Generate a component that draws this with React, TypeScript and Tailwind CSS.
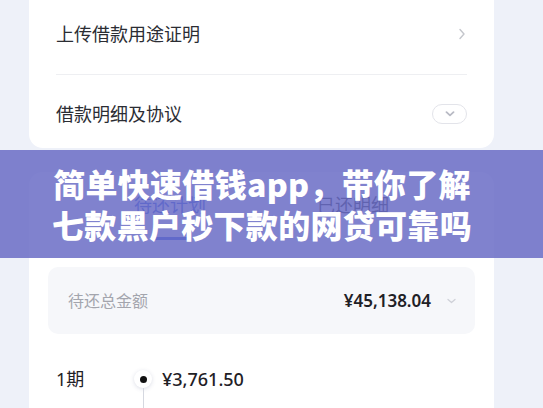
import React from "react";

const font = { fontFamily: '"Noto Sans", "Noto Sans CJK SC", sans-serif' };

export default function App() {
  return (
    <div
      className="relative w-[543px] h-[408px] overflow-hidden bg-[#eef1f9] pl-[29px] pr-[49px]"
      style={font}
    >
      {/* Card 1 */}
      <div className="bg-white rounded-b-[14px] px-[27px]">
        <div className="h-[68px] flex items-center justify-between">
          <span className="text-[18px] text-[#2b2d33]">上传借款用途证明</span>
          <svg width="8" height="12" viewBox="0 0 8 12" className="mr-[1px]">
            <path d="M2 1.5 L6 6 L2 10.5" fill="none" stroke="#c4c6cc" strokeWidth="1.4" strokeLinecap="round" strokeLinejoin="round" />
          </svg>
        </div>
        <div className="mt-[6px] h-px bg-[#eeeff2]" />
        <div className="mt-[5px] h-[68px] flex items-center justify-between">
          <span className="text-[18px] text-[#2b2d33]">借款明细及协议</span>
          <div className="w-[35px] h-[20px] rounded-full border border-[#e3e4ea] flex items-center justify-center">
            <svg width="10" height="6" viewBox="0 0 10 6">
              <path d="M1.5 1.2 L5 4.4 L8.5 1.2" fill="none" stroke="#b8bac4" strokeWidth="1.8" strokeLinecap="round" strokeLinejoin="round" />
            </svg>
          </div>
        </div>
      </div>

      {/* Card 2 */}
      <div className="mt-[24px] bg-white rounded-[14px] px-[19px] pb-[20px]">
        <div className="h-[68px] flex items-end justify-center gap-[111px]">
          <div className="flex flex-col items-center">
            <span className="text-[18px] leading-[24px] text-[#2f5be0]">待还计划</span>
            <div className="mt-[20px] w-[40px] h-[3px] rounded-full bg-[#2f5be0]" />
          </div>
          <div className="flex flex-col items-center">
            <span className="text-[18px] leading-[24px] text-[#2b2d33]">已还明细</span>
            <div className="mt-[20px] w-[40px] h-[3px]" />
          </div>
        </div>
        <div className="mt-[27px] h-[67px] rounded-[10px] bg-[#f6f7fa] pl-[20px] pr-[19px] flex items-center justify-between">
          <span className="text-[16px] text-[#a3a5ad]">待还总金额</span>
          <div className="flex items-center gap-[16px]">
            <span className="text-[17px] font-semibold text-[#1f2126]">¥45,138.04</span>
            <svg width="9" height="6" viewBox="0 0 9 6">
              <path d="M1 1.5 L4.5 4.5 L8 1.5" fill="none" stroke="#cfd1d8" strokeWidth="1.3" strokeLinecap="round" strokeLinejoin="round" />
            </svg>
          </div>
        </div>
        <div className="mt-[32px] flex px-[8px]">
          <div className="w-[74px] flex flex-col">
            <span className="text-[18px] leading-[26px] text-[#1f2126]">1期</span>
            <span className="mt-[13px] text-[13px] text-[#b0b2ba]">2024/03/08</span>
          </div>
          <div className="w-[26px] flex flex-col items-center">
            <div className="mt-[4px] w-[18px] h-[18px] rounded-full bg-white shadow-[0_1px_4px_rgba(60,70,120,0.18)] flex items-center justify-center">
              <div className="w-[7px] h-[7px] rounded-full bg-[#111]" />
            </div>
            <div className="w-px h-[40px] bg-[#d5d8e0]" />
          </div>
          <div className="ml-[6px] flex flex-col">
            <span className="text-[18px] leading-[26px] font-medium text-[#1f2126]">¥3,761.50</span>
            <span className="mt-[13px] text-[13px] text-[#b0b2ba]">本金 ¥3,500.00　　利息 ¥261.50</span>
          </div>
        </div>
      </div>

      {/* Banner overlay */}
      <div className="absolute left-0 top-[150px] w-[543px] h-[108px] pr-[19px] bg-[rgba(106,108,198,0.85)] flex flex-col items-center justify-center">
        <div
          className="text-white font-black text-[32px] leading-[41px] tracking-[0.3px]"
          style={{ fontFamily: '"Noto Sans CJK SC", "Noto Sans", sans-serif' }}
        >
          简单快速借钱app，带你了解
        </div>
        <div
          className="text-white font-black text-[32px] leading-[41px] tracking-[0.3px]"
          style={{ fontFamily: '"Noto Sans CJK SC", "Noto Sans", sans-serif' }}
        >
          七款黑户秒下款的网贷可靠吗
        </div>
      </div>
    </div>
  );
}
